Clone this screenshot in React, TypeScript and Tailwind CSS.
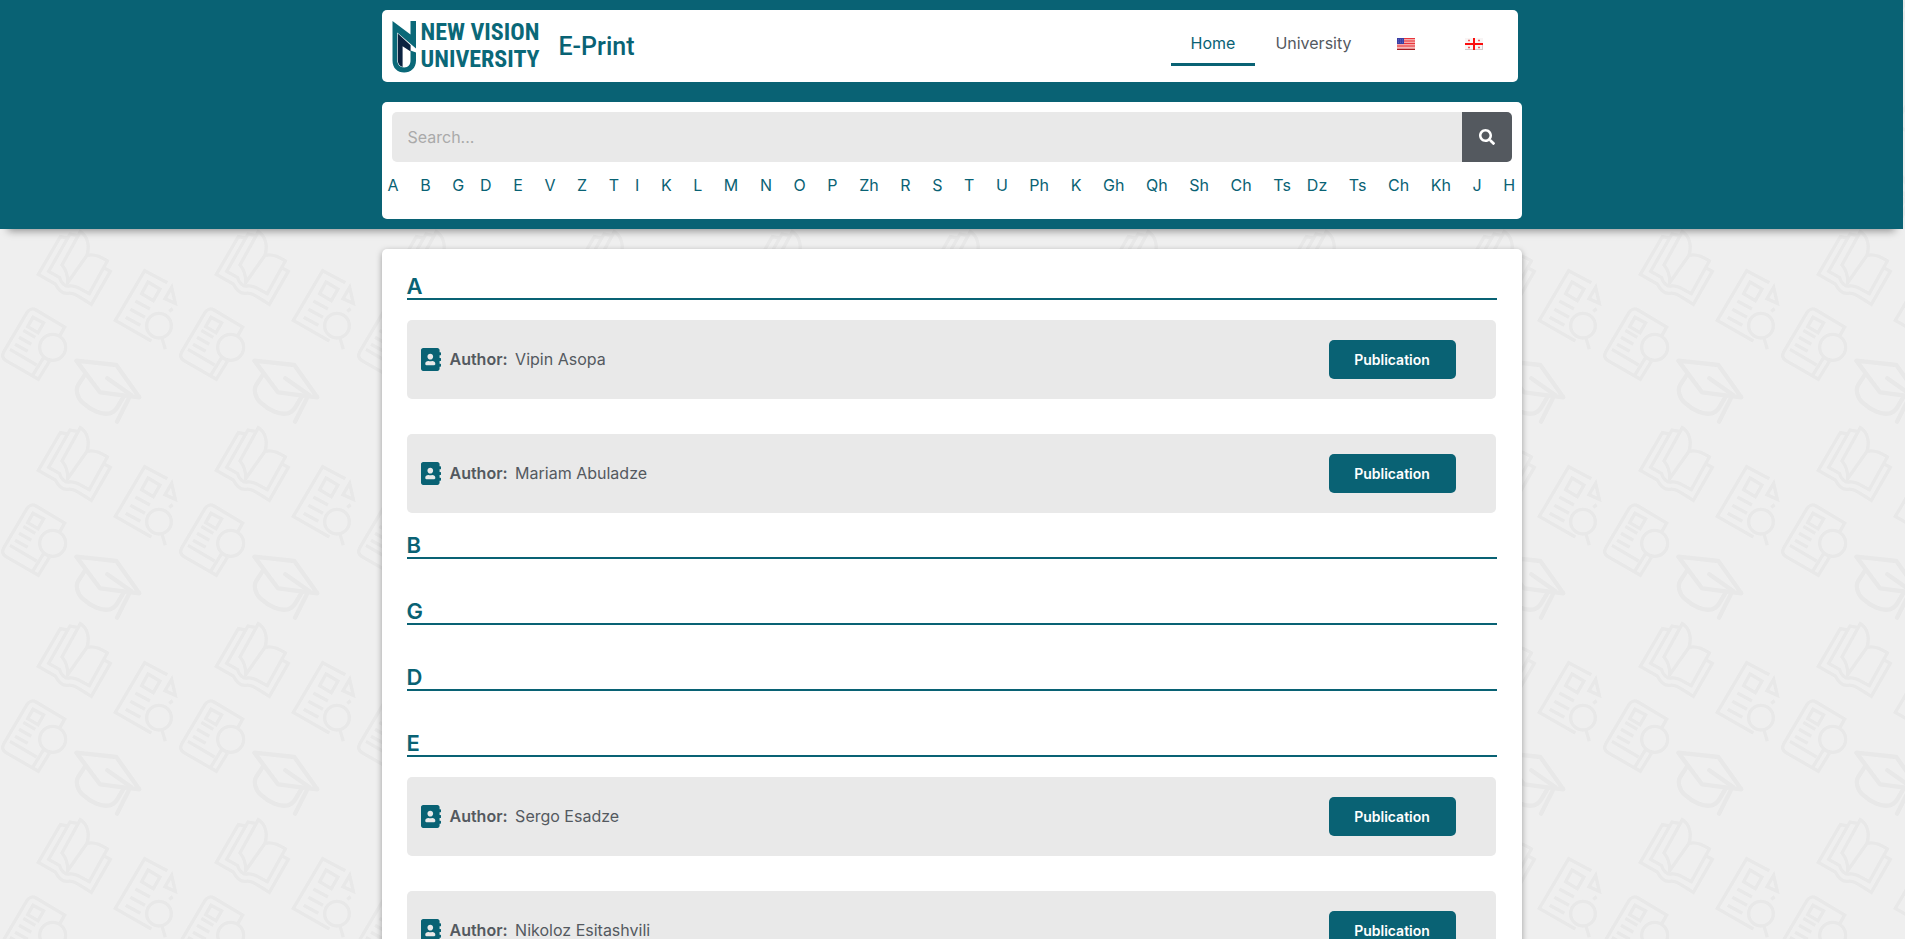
import { FaAddressBook, FaSearch } from "react-icons/fa";

type Section = { letter: string; authors: string[] };

const sections: Section[] = [
  { letter: "A", authors: ["Vipin Asopa", "Mariam Abuladze"] },
  { letter: "B", authors: [] },
  { letter: "G", authors: [] },
  { letter: "D", authors: [] },
  { letter: "E", authors: ["Sergo Esadze", "Nikoloz Esitashvili"] },
];

// Letters that share an inner array sit closer together in the index.
const index: string[][] = [
  ["A"], ["B"], ["G", "D"], ["E"], ["V"], ["Z"], ["T", "I"], ["K"], ["L"], ["M"],
  ["N"], ["O"], ["P"], ["Zh"], ["R"], ["S"], ["T"], ["U"], ["Ph"], ["K"], ["Gh"],
  ["Qh"], ["Sh"], ["Ch"], ["Ts", "Dz"], ["Ts"], ["Ch"], ["Kh"], ["J"], ["H"],
];

function Backdrop() {
  return (
    <svg aria-hidden="true" className="absolute inset-0 -z-10 h-full w-full">
      <defs>
        <pattern id="study" width="178" height="196" y="32" patternUnits="userSpaceOnUse">
          <g transform="scale(0.3333)" fill="none" stroke="#e8e8e8" strokeWidth="10">
            {/* open book */}
            <path d="M202 30 L181 26 L115 139 L166 168 C174 184 184 198 204 196 C216 192 228 200 274 229 L331 130 L314 121" />
            <path d="M232 22 L210 18 L146 130 L178 148 C184 166 194 176 208 174 C228 170 244 186 268 197 L322 99 C306 88 284 76 261 82 L203 164 C204 140 196 122 186 111 L241 11 C262 24 270 52 261 82" />
            {/* document with pencil and lens */}
            <path d="M502 164 L434 128 L346 277 L454 339" />
            <path d="M444 162 L480 183 L460 218 L425 197 Z M406 219 L450 243 M391 244 L435 268 M377 268 L421 292" />
            <path d="M515 178 L495 212 L526 226 Z M508 250 L518 242" />
            <circle cx="477" cy="293" r="37" />
            <path d="M486 330 L496 364" />
            {/* book with magnifier */}
            <path d="M178 326 L194 297 L108 246 C98 240 88 244 82 252 L12 370 C4 382 8 392 18 398 L115 454 L148 400 M30 364 L110 411 M98 442 L134 384" />
            <path d="M99 268 L131 285 L114 314 L83 296 Z M70 307 L106 328 M57 328 L94 349 M45 349 L83 370" />
            <circle cx="158" cy="358" r="39" />
            {/* graduation cap */}
            <path d="M229 398 L349 411 L418 508 L300 493 Z" strokeWidth="13" strokeLinejoin="round" />
            <path d="M257 436 L234 472 C226 486 232 510 248 524 C272 546 304 562 330 556 C346 552 350 542 372 504 M322 451 L392 500 L351 581" strokeWidth="13" strokeLinecap="round" />
          </g>
        </pattern>
      </defs>
      <rect width="100%" height="100%" fill="url(#study)" />
    </svg>
  );
}

function Logo() {
  return (
    <a href="#home" className="flex w-[147px] items-center gap-1 text-[#0a6878]">
      <svg aria-hidden="true" viewBox="0 0 25 53" className="h-[53px] w-[25px] shrink-0">
        <path fill="#0a6878" d="M0.5 1 L18.5 14.5 V1 H24 V28.5 L5.2 12.5 V40 C5.2 44.5 8 47.4 12.2 47.4 C16.4 47.4 18.5 44.5 18.5 40.4 V30.5 L24 32.5 V40.4 C24 48 18.8 52.4 12.2 52.4 C5.4 52.4 0.5 48 0.5 40.4 Z" />
        <path fill="#0b2341" d="M5.8 13.6 L18.6 25.2 V31.6 L10.6 26.2 V47 C7.4 46 5.8 43.4 5.8 40 Z" />
      </svg>
      <span className="flex flex-col font-['Roboto_Condensed','Roboto',sans-serif] text-2xl leading-[27px] font-bold whitespace-nowrap">
        <span>NEW VISION</span>
        <span>UNIVERSITY</span>
      </span>
    </a>
  );
}

function FlagUS() {
  return (
    <svg viewBox="0 0 18 12" className="h-3 w-[18px]">
      <rect width="18" height="12" fill="#f7a9a9" />
      <path d="M0 .5H18M0 3H18M0 5.5H18M0 8H18" stroke="#e8353b" strokeWidth="1.1" />
      <path d="M0 10H18" stroke="#f4c4c4" strokeWidth="1" />
      <path d="M0 11.4H18" stroke="#a81d22" strokeWidth="1.2" />
      <rect width="7" height="6" fill="#3a3fa5" />
      <path d="M1 1.5H6M1 3H6M1 4.5H6" stroke="#6f74c4" strokeWidth=".6" strokeDasharray="1 1" />
    </svg>
  );
}

function FlagGE() {
  return (
    <svg viewBox="0 0 18 12" className="h-3 w-[18px]">
      <rect width="18" height="12" fill="#f8f4f4" />
      <path d="M0 11.5H18M17.5 7V12" stroke="#d2cccc" />
      <path d="M9 0V12M0 6H18" stroke="#fb0d0d" strokeWidth="2" />
      <path d="M3 2.5H5M13 2.5H15M3 9.5H5M13 9.5H15" stroke="#ee5a5a" strokeWidth="1.6" />
    </svg>
  );
}

function AuthorRow({ name }: { name: string }) {
  return (
    <li className="mr-px flex h-[79px] items-center rounded-[5px] bg-[#e9e9e9] pr-10 pl-[14px] text-[#54595f]">
      <FaAddressBook aria-hidden="true" className="h-[23px] w-5 shrink-0 text-[#096274]" />
      <p className="ml-[9px] flex-1 pb-px text-base">
        <strong className="mr-[3px] font-semibold">Author:</strong> {name}
      </p>
      <a
        href="#publication"
        className="flex h-[39px] w-[127px] items-center justify-center rounded-[5px] bg-[#096274] text-sm font-semibold text-white"
      >
        Publication
      </a>
    </li>
  );
}

export default function App() {
  return (
    <div className="relative isolate min-h-screen bg-[#efefef] pr-[2px] font-['Inter',sans-serif]">
      <Backdrop />
      <header className="bg-[#096274] py-[10px] shadow-[0_10px_8px_-8px_rgba(0,0,0,0.4)]">
        <div className="mx-auto max-w-[1140px]">
          <div className="mr-1 flex h-[72px] items-center rounded-[5px] bg-white px-[10px]">
            <Logo />
            <span className="ml-5 pt-px font-['Roboto',sans-serif] text-[25px] font-medium text-[#096274]">E-Print</span>
            <nav className="ml-auto flex h-10 items-stretch text-base text-[#54595f]">
              <a href="#home" className="flex items-center border-b-[3px] border-[#096274] px-5 pb-1 text-[#096274]">
                Home
              </a>
              <a href="#university" className="flex items-center border-b-[3px] border-transparent px-5 pb-1">
                University
              </a>
              <a href="#en" aria-label="English" className="flex items-center border-b-[3px] border-transparent px-[25px] pb-[2px]">
                <FlagUS />
              </a>
              <a href="#ka" aria-label="Georgian" className="flex items-center border-b-[3px] border-transparent px-[25px] pb-[2px]">
                <FlagGE />
              </a>
            </nav>
          </div>

          <div className="mt-5 rounded-[5px] bg-white pt-[10px] pb-[21px]">
            <form className="mx-[10px] flex h-[50px] overflow-hidden rounded-[5px]" onSubmit={(e) => e.preventDefault()}>
              <input
                type="search"
                aria-label="Search"
                placeholder="Search..."
                className="min-w-0 flex-1 bg-[#e9e9e9] px-4 text-base text-[#54595f] outline-none placeholder:text-[#aaaaaa]"
              />
              <button type="submit" aria-label="Submit search" className="flex w-[50px] items-center justify-center bg-[#54595f] text-white">
                <FaSearch className="size-4" />
              </button>
            </form>
            <nav aria-label="Author index" className="mt-[11px] flex justify-between px-[6px] text-base leading-[25px] text-[#096274]">
              {index.map((group, i) => (
                <span key={i} className="flex gap-4">
                  {group.map((letter) => (
                    <a key={letter} href={"#" + letter}>
                      {letter}
                    </a>
                  ))}
                </span>
              ))}
            </nav>
          </div>
        </div>
      </header>

      <main className="mx-auto mt-5 max-w-[1140px] rounded-[5px] bg-white px-[25px] py-[5px] shadow-[0_2px_6px_rgba(0,0,0,0.35)]">
        {sections.map(({ letter, authors }) => (
          <section key={letter} className="pb-5 last:pb-0">
            <h2 className="flex h-[46px] items-end border-b-2 border-[#096274] text-[22px] leading-6 font-semibold text-[#096274]">
              {letter}
            </h2>
            {authors.length > 0 && (
              <ul className="-mb-5 flex flex-col gap-[35px] pt-5">
                {authors.map((name) => (
                  <AuthorRow key={name} name={name} />
                ))}
              </ul>
            )}
          </section>
        ))}
      </main>
    </div>
  );
}
